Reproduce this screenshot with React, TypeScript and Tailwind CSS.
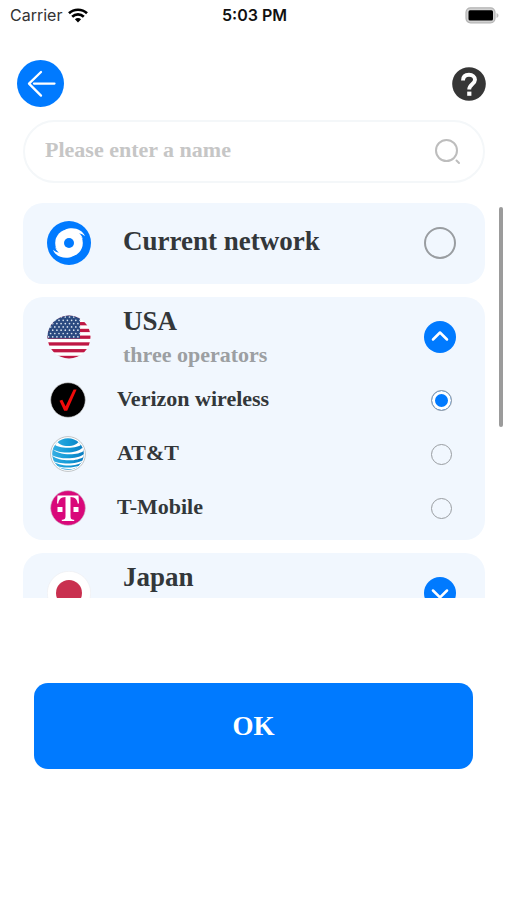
import { useState, type ReactNode } from "react";

function WifiIcon() {
  return (
    <svg viewBox="0 0 20 15" className="h-[15px] w-5" aria-hidden="true" fill="none" stroke="#000" strokeWidth="2.7">
      <path d="M1 5.2C6 .6 14 .6 19 5.2" />
      <path d="M4.2 8.700C7.500 5.600 12.500 5.600 15.800 8.700" />
      <path d="M6.900 11.300C8.700 9.600 11.300 9.600 13.100 11.300L10 14.400Z" fill="#000" stroke="none" />
    </svg>
  );
}

function BatteryIcon() {
  return (
    <svg viewBox="0 0 34 17" className="h-[17px] w-[34px]" aria-hidden="true">
      <rect x="1" y="0.800" width="29" height="15" rx="4.500" fill="#d2d2d2" stroke="#b4b4b4" strokeWidth="1.200" />
      <rect x="3.500" y="3.200" width="24.500" height="10.200" rx="1.500" fill="#000" />
      <path d="M31.500 6v5c1.200-.4 2-1.300 2-2.500s-.8-2.100-2-2.500Z" fill="#c2c2c2" />
    </svg>
  );
}

function BackIcon() {
  return (
    <svg viewBox="0 0 47 47" className="size-[47px]" aria-hidden="true">
      <circle cx="23.500" cy="23.500" r="23.500" fill="#007aff" />
      <path d="M24 12 12 23.600 24 35.600M17 23.600H37.500" fill="none" stroke="#fff" strokeWidth="2.300" strokeLinecap="round" strokeLinejoin="round" />
    </svg>
  );
}

function HelpIcon() {
  return (
    <svg viewBox="0 0 34 34" className="size-[34px]" aria-hidden="true">
      <circle cx="17" cy="17" r="16.800" fill="#363636" />
      <path d="M11 13.600C11 9.400 13.500 7.800 17 7.800S23 10 23 12.800C23 16.800 17.200 17.400 17.200 22.600" fill="none" stroke="#fff" strokeWidth="3.900" />
      <rect x="15.200" y="24.600" width="4.200" height="4.200" fill="#fff" />
    </svg>
  );
}

function SearchIcon() {
  return (
    <svg viewBox="0 0 27 27" className="size-[27px]" aria-hidden="true" fill="none" stroke="#bdbdbd" strokeWidth="2" strokeLinecap="round">
      <circle cx="12.500" cy="12.500" r="10.500" />
      <path d="m22.500 22.500 2.500 2.500" />
    </svg>
  );
}

function NetworkIcon() {
  const tail = "M18 8.700C26 5 35.500 8.300 38 15.300C36.200 13.700 34.200 12.700 32 12.300C34.200 14 35.400 16 35.900 18.500C33 13 26 9.500 18 8.700Z";
  return (
    <svg viewBox="0 0 44 44" className="size-11" aria-hidden="true">
      <circle cx="22" cy="22" r="22" fill="#007aff" />
      <circle cx="22" cy="22" r="13.800" fill="#fff" />
      <path d={tail} fill="#fff" />
      <path d={tail} fill="#fff" transform="rotate(180 22 22)" />
      <circle cx="22" cy="22" r="5" fill="#007aff" />
    </svg>
  );
}

const stripes = [0, 1, 2, 3, 4, 5, 6];
const starRows = [0, 1, 2, 3, 4, 5, 6];
const starCols = [0, 1, 2, 3, 4, 5, 6, 7];

function UsaFlag() {
  return (
    <svg viewBox="0 0 44 44" className="size-11" aria-hidden="true">
      <clipPath id="usa-round">
        <circle cx="22" cy="22" r="21.500" />
      </clipPath>
      <g clipPath="url(#usa-round)">
        <rect width="44" height="44" fill="#fff" />
        {stripes.map((i) => (
          <rect key={i} y={i * 6.75 + 0.3} width="44" height="3.300" fill="#bf1744" />
        ))}
        <rect width="33" height="23.500" fill="#2b4a80" />
        {starRows.map((r) =>
          starCols.map((c) => (
            <circle key={`${r}-${c}`} cx={1.5 + c * 4.2 + (r % 2) * 2.1} cy={2 + r * 3.3} r="0.850" fill="#dbe4ef" />
          )),
        )}
      </g>
    </svg>
  );
}

function JapanFlag() {
  return (
    <svg viewBox="0 0 44 44" className="size-11" aria-hidden="true">
      <circle cx="22" cy="22" r="21.700" fill="#fff" stroke="#ececf0" strokeWidth="0.600" />
      <circle cx="22" cy="22" r="13" fill="#c9304f" />
    </svg>
  );
}

function VerizonLogo() {
  return (
    <svg viewBox="0 0 36 36" className="size-9" aria-hidden="true">
      <circle cx="18" cy="18" r="17.300" fill="#000" stroke="#cfcfcf" strokeWidth="0.600" />
      <path d="M9.500 18.800 12.300 17.800 15.600 24.200 23.600 7.600H26.600L17.200 28.800H14.200Z" fill="#f00b0b" />
    </svg>
  );
}

function AttLogo() {
  return (
    <svg viewBox="0 0 36 36" className="size-9" aria-hidden="true">
      <defs>
        <linearGradient id="att-blue" x1="0" x2="1">
          <stop offset="0" stopColor="#35aee2" />
          <stop offset=".5" stopColor="#149bd7" />
          <stop offset="1" stopColor="#0b7cc0" />
        </linearGradient>
        <clipPath id="att-round">
          <circle cx="18" cy="18" r="15.800" />
        </clipPath>
      </defs>
      <circle cx="18" cy="18" r="17.400" fill="#fff" stroke="#bfc3c6" strokeWidth="1" />
      <circle cx="18" cy="18" r="15.800" fill="url(#att-blue)" />
      <g clipPath="url(#att-round)" fill="#fff">
        <path d="M7 4C8 12 28 12 29 4L31.500 8C29 13 7 13 4.500 8Z" />
        <path d="M2 12.500C7 17.500 27 18.500 32.500 11.500L34.500 14C29 20.500 7 19.500 2 12.500Z" />
        <path d="M1 18.500C8 23.500 28 24 34.500 17.500V20C28 26 8 26 1 18.500Z" />
        <path d="M2 24.500C9 28.500 27 29 34 23.500L33 25.500C27 31 9 31 2 24.500Z" />
        <path d="M6 29.800C12 32.300 24 32.500 32 28.500L30 30.500C24 34 12 34 6 29.800Z" />
      </g>
    </svg>
  );
}

function TMobileLogo() {
  return (
    <svg viewBox="0 0 36 36" className="size-9" aria-hidden="true">
      <circle cx="18" cy="18" r="17.300" fill="#d9087a" stroke="#c9a5ba" strokeWidth="0.600" />
      <path d="M7.500 5.500H28.500L29 13.500H27.700C27.200 9.300 25.200 7.100 20.500 6.900V26C20.500 29 21.500 29.600 24.200 29.700V31H11.800V29.700C14.500 29.600 15.500 29 15.500 26V6.900C10.800 7.100 8.800 9.300 8.300 13.500H7Z" fill="#fff" />
      <rect x="7.500" y="17" width="5" height="5" fill="#fff" />
      <rect x="23.500" y="17" width="5" height="5" fill="#fff" />
    </svg>
  );
}

type Operator = { id: string; name: string; logo: ReactNode };
type Country = { id: string; name: string; note?: string; flag: ReactNode; operators: Operator[] };

const countries: Country[] = [
  {
    id: "usa",
    name: "USA",
    note: "three operators",
    flag: <UsaFlag />,
    operators: [
      { id: "verizon", name: "Verizon wireless", logo: <VerizonLogo /> },
      { id: "att", name: "AT&T", logo: <AttLogo /> },
      { id: "tmobile", name: "T-Mobile", logo: <TMobileLogo /> },
    ],
  },
  { id: "japan", name: "Japan", flag: <JapanFlag />, operators: [] },
];

function CountryCard({
  country,
  selected,
  onSelect,
}: {
  country: Country;
  selected: string;
  onSelect: (id: string) => void;
}) {
  const [open, setOpen] = useState(country.operators.length > 0);
  return (
    <section className="shrink-0 rounded-[20px] bg-[#f1f7fe] pb-[5px]">
      <div className="flex h-[76px] items-center pt-1 pr-[29px] pl-6">
        {country.flag}
        <div className="ml-8 flex-1">
          <h2 className="text-[27px] leading-8">{country.name}</h2>
          <p className="mt-1 h-7 text-[22px] leading-7 text-[#9c9fa2]">{country.note}</p>
        </div>
        <button
          type="button"
          aria-label={`Toggle ${country.name}`}
          aria-expanded={open}
          onClick={() => setOpen(!open)}
          className="size-8 rounded-full bg-[#007aff]"
        >
          <svg viewBox="0 0 32 32" className="size-8" fill="none" stroke="#fff" strokeWidth="2.500" strokeLinecap="round" strokeLinejoin="round">
            <path d={open ? "m9 18.500 7-7 7 7" : "m9 13.500 7 7 7-7"} />
          </svg>
        </button>
      </div>
      {open &&
        country.operators.map((op) => (
          <label key={op.id} className="flex h-[54px] items-center pr-[33px] pl-[27px]">
            {op.logo}
            <span className="ml-[31px] flex-1 pb-0.5 text-[22px] leading-7">{op.name}</span>
            <input
              type="radio"
              name="network"
              checked={selected === op.id}
              onChange={() => onSelect(op.id)}
              className="size-[21px] appearance-none rounded-full border border-[#999da1] checked:bg-[#007aff] checked:shadow-[inset_0_0_0_3px_white]"
            />
          </label>
        ))}
    </section>
  );
}

export default function App() {
  const [selected, setSelected] = useState("verizon");
  return (
    <div className="min-h-screen bg-white pb-8 font-['Liberation_Serif',serif] font-bold text-[#33373a]">
      <div className="grid h-[30px] grid-cols-3 items-center pr-2 pl-[10px] font-[Inter,sans-serif] text-base leading-5 text-[#111]">
        <div className="flex items-center gap-1.5 font-normal text-[#333]">
          Carrier
          <WifiIcon />
        </div>
        <div className="text-center font-semibold">5:03 PM</div>
        <div className="flex justify-end">
          <BatteryIcon />
        </div>
      </div>

      <header className="mt-[30px] flex items-center justify-between pr-[21px] pl-[17px]">
        <button type="button" aria-label="Back">
          <BackIcon />
        </button>
        <button type="button" aria-label="Help">
          <HelpIcon />
        </button>
      </header>

      <div className="mr-[22px] ml-[23px] mt-[13px] flex h-[63px] items-center rounded-full border-2 border-[#f4f7f9] pr-[22px] pl-5">
        <input
          type="text"
          aria-label="Name"
          placeholder="Please enter a name"
          className="min-w-0 flex-1 bg-transparent pb-1 text-[22px] leading-7 outline-none placeholder:text-[#c6c6c6]"
        />
        <button type="button" aria-label="Search">
          <SearchIcon />
        </button>
      </div>

      <main className="relative mt-5">
        <div className="flex h-[395px] flex-col gap-[13px] overflow-y-auto pr-[22px] pl-[23px] [scrollbar-width:none]">
          <section className="shrink-0 rounded-[20px] bg-[#f1f7fe] pb-[5px]">
            <label className="flex h-[76px] items-center pt-1 pr-[29px] pl-6">
              <NetworkIcon />
              <span className="ml-8 flex-1 pb-1 text-[27px] leading-8">Current network</span>
              <input
                type="radio"
                name="network"
                checked={selected === "current"}
                onChange={() => setSelected("current")}
                className="size-8 appearance-none rounded-full border-2 border-[#999da1] checked:bg-[#007aff] checked:shadow-[inset_0_0_0_5px_white]"
              />
            </label>
          </section>
          {countries.map((country) => (
            <CountryCard key={country.id} country={country} selected={selected} onSelect={setSelected} />
          ))}
        </div>
        <div className="absolute top-1 right-1 h-[220px] w-1 rounded-full bg-[#9b9b9b]" />
      </main>

      <div className="mt-[85px] px-[34px]">
        <button type="button" className="h-[86px] w-full rounded-[14px] bg-[#007aff] text-[27px] leading-8 text-white">
          OK
        </button>
      </div>
    </div>
  );
}
